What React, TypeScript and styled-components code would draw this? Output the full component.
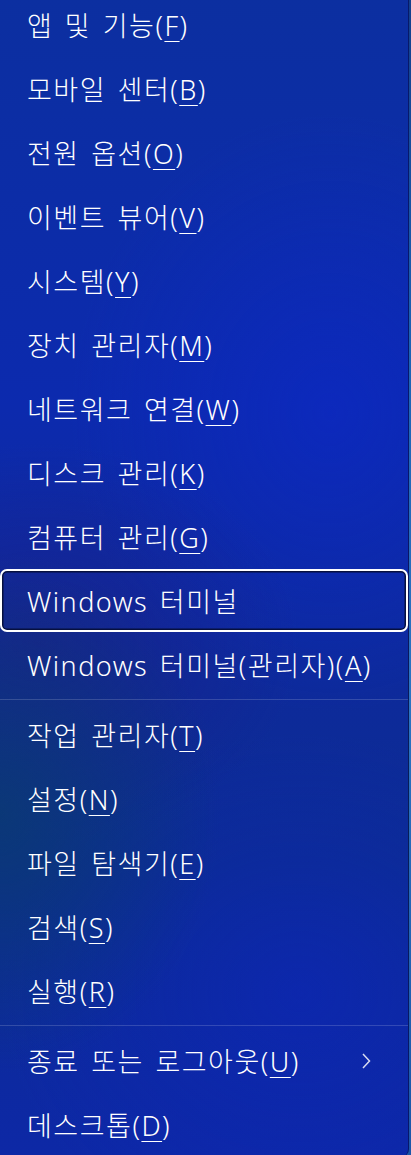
import styled, { createGlobalStyle } from "styled-components";

const GlobalStyle = createGlobalStyle`
  html, body {
    margin: 0;
    padding: 0;
    background: #1d5fb0;
    overflow: hidden;
  }
  body {
    font-family: "Noto Sans", "Noto Sans CJK KR", sans-serif;
  }
`;

const Screen = styled.div`
  width: 411px;
  height: 1155px;
  overflow: hidden;
  background: linear-gradient(180deg, #123f8c 0%, #1b62b4 30%, #2a74c2 60%, #1a56a8 100%);
`;

const Panel = styled.div`
  width: 408px;
  margin-top: -7px;
  display: flex;
  flex-direction: column;
  border-right: 1px solid rgba(4, 10, 60, 0.55);
  border-bottom-right-radius: 8px;
  background:
    radial-gradient(ellipse 220px 260px at 0px 820px, rgba(10, 60, 110, 0.75), transparent),
    radial-gradient(ellipse 260px 200px at 40px 650px, rgba(30, 30, 130, 0.55), transparent),
    radial-gradient(ellipse 260px 300px at 330px 420px, rgba(12, 40, 200, 0.55), transparent),
    radial-gradient(ellipse 300px 260px at 300px 1000px, rgba(12, 36, 190, 0.5), transparent),
    linear-gradient(180deg, #0c2fa0 0%, #0c2aae 35%, #0d2a9a 60%, #0c2c92 75%, #0d28a6 100%);
`;

const Item = styled.div<{ $focused?: boolean }>`
  position: relative;
  height: 64px;
  box-sizing: border-box;
  display: flex;
  align-items: center;
  justify-content: space-between;
  padding: 0 37px 0 27px;
  color: #ffffff;
  font-size: 27px;
  font-weight: 300;
  line-height: 1;
  letter-spacing: 1.5px;
  word-spacing: 3px;
  white-space: nowrap;
  ${({ $focused }) =>
    $focused &&
    `
    &::after {
      content: "";
      position: absolute;
      left: 0;
      right: 0;
      top: 0;
      bottom: 1px;
      border: 2.5px solid #ffffff;
      border-radius: 7px;
      box-shadow: inset 0 0 0 1.5px #07103e;
      pointer-events: none;
    }
  `}
`;

const Label = styled.span`
  display: inline-block;
`;

const Key = styled.span`
  text-decoration: underline;
  text-decoration-thickness: 1px;
  text-underline-offset: 5px;
`;

const Separator = styled.div`
  height: 1px;
  margin: 2px 0 3px;
  background: rgba(255, 255, 255, 0.16);
`;

const Chevron = styled.svg`
  width: 10px;
  height: 18px;
  flex: none;
`;

type Entry = { text: string; key?: string; focused?: boolean; sub?: boolean } | "sep";

const entries: Entry[] = [
  { text: "앱 및 기능", key: "F" },
  { text: "모바일 센터", key: "B" },
  { text: "전원 옵션", key: "O" },
  { text: "이벤트 뷰어", key: "V" },
  { text: "시스템", key: "Y" },
  { text: "장치 관리자", key: "M" },
  { text: "네트워크 연결", key: "W" },
  { text: "디스크 관리", key: "K" },
  { text: "컴퓨터 관리", key: "G" },
  { text: "Windows 터미널", focused: true },
  { text: "Windows 터미널(관리자)", key: "A" },
  "sep",
  { text: "작업 관리자", key: "T" },
  { text: "설정", key: "N" },
  { text: "파일 탐색기", key: "E" },
  { text: "검색", key: "S" },
  { text: "실행", key: "R" },
  "sep",
  { text: "종료 또는 로그아웃", key: "U", sub: true },
  { text: "데스크톱", key: "D" },
];

const App = () => {
  return (
    <>
      <GlobalStyle />
      <Screen>
        <Panel>
          {entries.map((e, i) =>
            e === "sep" ? (
              <Separator key={i} />
            ) : (
              <Item key={i} $focused={e.focused}>
                <Label>
                  {e.text}
                  {e.key && (
                    <>
                      (<Key>{e.key}</Key>)
                    </>
                  )}
                </Label>
                {e.sub && (
                  <Chevron viewBox="0 0 10 18">
                    <path d="M2 2 L8.5 9 L2 16" fill="none" stroke="#d8dcf0" strokeWidth="1.5" />
                  </Chevron>
                )}
              </Item>
            )
          )}
        </Panel>
      </Screen>
    </>
  );
};

export default App;
